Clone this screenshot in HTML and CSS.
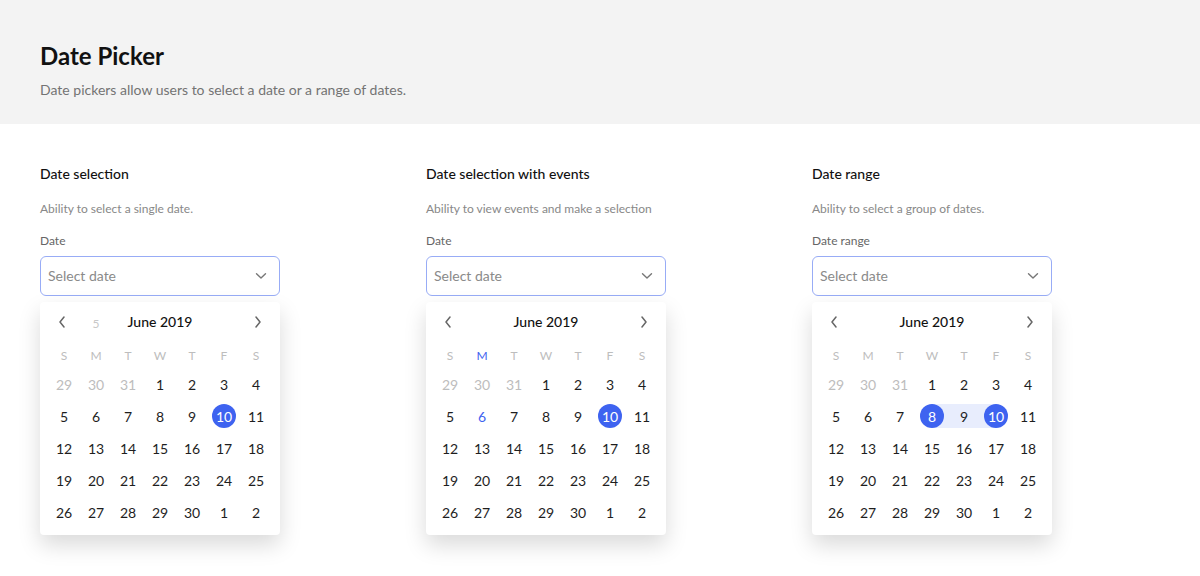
FILE: index.html
```html
<!DOCTYPE html>
<html>
<head>
<meta charset="utf-8">
<link rel="stylesheet" href="styles.css">
</head>
<body>
<header class="hero">
  <h1 class="hero-title">Date Picker</h1>
  <p class="hero-sub">Date pickers allow users to select a date or a range of dates.</p>
</header>
<main class="cols">
  <section class="col">
    <h2 class="sec-title">Date selection</h2>
    <p class="sec-desc">Ability to select a single date.</p>
    <label class="field-label">Date</label>
    <div class="input"><span class="placeholder">Select date</span><svg class="caret" width="12" height="8" viewBox="0 0 12 8"><path d="M1.5 1.8 L6 6 L10.5 1.8" fill="none" stroke="#777" stroke-width="1.4" stroke-linecap="round" stroke-linejoin="round"/></svg></div>
    <div class="cal">
      <div class="cal-head">
        <span class="nav"><svg width="8" height="12" viewBox="0 0 8 12"><path d="M6 1 L2 6 L6 11" fill="none" stroke="#666" stroke-width="1.5" stroke-linecap="round" stroke-linejoin="round"/></svg></span>
        <span class="ghost">5</span>
        <span class="month">June 2019</span>
        <span class="nav next"><svg width="8" height="12" viewBox="0 0 8 12"><path d="M2 1 L6 6 L2 11" fill="none" stroke="#666" stroke-width="1.5" stroke-linecap="round" stroke-linejoin="round"/></svg></span>
      </div>
      <div class="grid wk"><span>S</span><span>M</span><span>T</span><span>W</span><span>T</span><span>F</span><span>S</span></div>
      <div class="grid days">
        <span class="out">29</span><span class="out">30</span><span class="out">31</span><span>1</span><span>2</span><span>3</span><span>4</span>
        <span>5</span><span>6</span><span>7</span><span>8</span><span>9</span><span class="sel"><i>10</i></span><span>11</span>
        <span>12</span><span>13</span><span>14</span><span>15</span><span>16</span><span>17</span><span>18</span>
        <span>19</span><span>20</span><span>21</span><span>22</span><span>23</span><span>24</span><span>25</span>
        <span>26</span><span>27</span><span>28</span><span>29</span><span>30</span><span>1</span><span>2</span>
      </div>
    </div>
  </section>
  <section class="col">
    <h2 class="sec-title">Date selection with events</h2>
    <p class="sec-desc">Ability to view events and make a selection</p>
    <label class="field-label">Date</label>
    <div class="input"><span class="placeholder">Select date</span><svg class="caret" width="12" height="8" viewBox="0 0 12 8"><path d="M1.5 1.8 L6 6 L10.5 1.8" fill="none" stroke="#777" stroke-width="1.4" stroke-linecap="round" stroke-linejoin="round"/></svg></div>
    <div class="cal">
      <div class="cal-head">
        <span class="nav"><svg width="8" height="12" viewBox="0 0 8 12"><path d="M6 1 L2 6 L6 11" fill="none" stroke="#666" stroke-width="1.5" stroke-linecap="round" stroke-linejoin="round"/></svg></span>
        <span class="ghost"></span>
        <span class="month">June 2019</span>
        <span class="nav next"><svg width="8" height="12" viewBox="0 0 8 12"><path d="M2 1 L6 6 L2 11" fill="none" stroke="#666" stroke-width="1.5" stroke-linecap="round" stroke-linejoin="round"/></svg></span>
      </div>
      <div class="grid wk"><span>S</span><span class="ev">M</span><span>T</span><span>W</span><span>T</span><span>F</span><span>S</span></div>
      <div class="grid days">
        <span class="out">29</span><span class="out">30</span><span class="out">31</span><span>1</span><span>2</span><span>3</span><span>4</span>
        <span>5</span><span class="ev">6</span><span>7</span><span>8</span><span>9</span><span class="sel"><i>10</i></span><span>11</span>
        <span>12</span><span>13</span><span>14</span><span>15</span><span>16</span><span>17</span><span>18</span>
        <span>19</span><span>20</span><span>21</span><span>22</span><span>23</span><span>24</span><span>25</span>
        <span>26</span><span>27</span><span>28</span><span>29</span><span>30</span><span>1</span><span>2</span>
      </div>
    </div>
  </section>
  <section class="col">
    <h2 class="sec-title">Date range</h2>
    <p class="sec-desc">Ability to select a group of dates.</p>
    <label class="field-label">Date range</label>
    <div class="input"><span class="placeholder">Select date</span><svg class="caret" width="12" height="8" viewBox="0 0 12 8"><path d="M1.5 1.8 L6 6 L10.5 1.8" fill="none" stroke="#777" stroke-width="1.4" stroke-linecap="round" stroke-linejoin="round"/></svg></div>
    <div class="cal">
      <div class="cal-head">
        <span class="nav"><svg width="8" height="12" viewBox="0 0 8 12"><path d="M6 1 L2 6 L6 11" fill="none" stroke="#666" stroke-width="1.5" stroke-linecap="round" stroke-linejoin="round"/></svg></span>
        <span class="ghost"></span>
        <span class="month">June 2019</span>
        <span class="nav next"><svg width="8" height="12" viewBox="0 0 8 12"><path d="M2 1 L6 6 L2 11" fill="none" stroke="#666" stroke-width="1.5" stroke-linecap="round" stroke-linejoin="round"/></svg></span>
      </div>
      <div class="grid wk"><span>S</span><span>M</span><span>T</span><span>W</span><span>T</span><span>F</span><span>S</span></div>
      <div class="grid days">
        <span class="out">29</span><span class="out">30</span><span class="out">31</span><span>1</span><span>2</span><span>3</span><span>4</span>
        <span>5</span><span>6</span><span>7</span><span class="sel rs"><i>8</i></span><span class="mid">9</span><span class="sel re"><i>10</i></span><span>11</span>
        <span>12</span><span>13</span><span>14</span><span>15</span><span>16</span><span>17</span><span>18</span>
        <span>19</span><span>20</span><span>21</span><span>22</span><span>23</span><span>24</span><span>25</span>
        <span>26</span><span>27</span><span>28</span><span>29</span><span>30</span><span>1</span><span>2</span>
      </div>
    </div>
  </section>
</main>
</body>
</html>
```

FILE: styles.css
```css
* { box-sizing: border-box; }
html, body { margin: 0; padding: 0; background: #fff; }
body { font-family: Lato, "Open Sans", sans-serif; color: #1a1a1a; min-height: 576px; }

.hero {
  background: #f3f3f3;
  padding: 40px 40px 24px;
  height: 124px;
}
.hero-title {
  margin: 0;
  font-size: 24px;
  line-height: 32px;
  font-weight: 700;
  color: #111;
}
.hero-sub {
  margin: 8px 0 0;
  font-size: 14px;
  line-height: 20px;
  color: #737373;
}

.cols {
  display: flex;
  gap: 146px;
  padding: 40px 40px 40px;
}
.col { width: 240px; display: flex; flex-direction: column; }

.sec-title {
  margin: 0;
  font-size: 14px;
  line-height: 20px;
  font-weight: 500;
  color: #111;
}
.sec-desc {
  margin: 17px 0 0;
  font-size: 12px;
  line-height: 16px;
  color: #888;
}
.field-label {
  margin-top: 16px;
  font-size: 12px;
  line-height: 16px;
  color: #666;
}
.input {
  margin-top: 7px;
  height: 40px;
  border: 1px solid #98acf6;
  border-radius: 6px;
  display: flex;
  align-items: center;
  justify-content: space-between;
  padding: 0 12px 0 7px;
}
.placeholder { font-size: 14px; color: #8a8a8a; margin-top: -1px; }
.caret { display: block; }

.cal {
  margin-top: 6px;
  background: #fff;
  border-radius: 4px;
  box-shadow: 0 10px 22px rgba(0,0,0,0.15);
  padding: 0 8px 7px;
}
.cal-head {
  display: grid;
  grid-template-columns: repeat(7, 32px);
  height: 39px;
  align-items: center;
}
.nav { display: flex; justify-content: center; align-items: center; }
.nav svg { display: block; margin-left: -4px; }
.nav.next { grid-column: 7; }
.nav.next svg { margin-left: 4px; }
.ghost { text-align: center; font-size: 12px; color: #c8c8c8; padding-top: 4px; }
.month {
  grid-column: 3 / span 3;
  text-align: center;
  font-size: 14px;
  font-weight: 500;
  color: #111;
}
.grid { display: grid; grid-template-columns: repeat(7, 32px); }
.wk { height: 27px; align-items: center; padding-top: 2px; }
.wk span { text-align: center; font-size: 12px; color: #bdbdbd; }
.days span {
  height: 32px;
  display: flex;
  align-items: center;
  justify-content: center;
  font-size: 14px;
  color: #1e1e1e;
}
.days .out { color: #bdbdbd; }
.ev, .wk .ev, .days .ev { color: #3f63f0; }
.days .sel i {
  font-style: normal;
  width: 24px;
  height: 24px;
  border-radius: 50%;
  background: #3e63f0;
  color: #fff;
  display: flex;
  align-items: center;
  justify-content: center;
}
.days .mid { background: linear-gradient(#fff 4px, #e8edfd 4px, #e8edfd 28px, #fff 28px); }
.days .rs { background: linear-gradient(to right, #fff 50%, transparent 50%), linear-gradient(#fff 4px, #e8edfd 4px, #e8edfd 28px, #fff 28px); }
.days .re { background: linear-gradient(to left, #fff 50%, transparent 50%), linear-gradient(#fff 4px, #e8edfd 4px, #e8edfd 28px, #fff 28px); }
```
